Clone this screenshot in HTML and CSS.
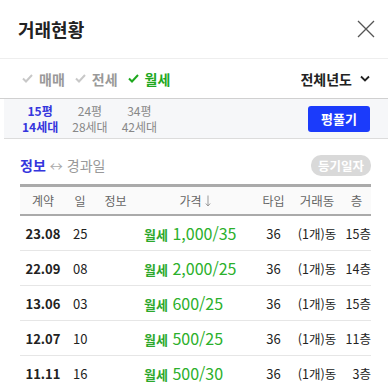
FILE: index.html
```html
<!DOCTYPE html>
<html lang="ko">
  <head>
    <meta charset="UTF-8" />
    <meta name="viewport" content="width=device-width, initial-scale=1.0" />
    <title>거래현황</title>
    <link rel="stylesheet" href="styles.css">
  </head>
  <body>
    <div class="header">
      <h1>거래현황</h1>
      <svg class="close" width="20" height="20" viewBox="0 0 20 20">
        <path d="M2 2L18 18M18 2L2 18" stroke="#555" stroke-width="1.3" fill="none" />
      </svg>
    </div>

    <div class="filters">
      <div class="types">
        <span class="type">
          <svg width="11" height="9" viewBox="0 0 11 9"><path d="M1 4.5L4 7.5L10 1" stroke="currentColor" stroke-width="2" fill="none" /></svg>
          매매
        </span>
        <span class="type">
          <svg width="11" height="9" viewBox="0 0 11 9"><path d="M1 4.5L4 7.5L10 1" stroke="currentColor" stroke-width="2" fill="none" /></svg>
          전세
        </span>
        <span class="type active">
          <svg width="11" height="9" viewBox="0 0 11 9"><path d="M1 4.5L4 7.5L10 1" stroke="currentColor" stroke-width="2" fill="none" /></svg>
          월세
        </span>
      </div>
      <div class="year">
        전체년도
        <svg width="10" height="7" viewBox="0 0 10 7"><path d="M1 1.5L5 5.5L9 1.5" stroke="#222" stroke-width="1.8" fill="none" /></svg>
      </div>
    </div>

    <div class="areas">
      <div class="area-list">
        <div class="area selected"><span>15평</span><span>14세대</span></div>
        <div class="area"><span>24평</span><span>28세대</span></div>
        <div class="area"><span>34평</span><span>42세대</span></div>
      </div>
      <button class="pyeong">평풀기</button>
    </div>

    <div class="info">
      <div class="toggle">
        <span class="on">정보</span>
        <span class="arrow">&harr;</span>
        <span>경과일</span>
      </div>
      <span class="pill">등기일자</span>
    </div>

    <div class="table">
      <div class="row head">
        <span class="c-date">계약</span>
        <span class="c-day">일</span>
        <span class="c-info">정보</span>
        <span class="c-price">가격<svg class="down" width="6" height="12" viewBox="0 0 6 12"><path d="M3 0.5V11M0.8 8.5L3 11L5.2 8.5" stroke="#999" stroke-width="1" fill="none" /></svg></span>
        <span class="c-type">타입</span>
        <span class="c-dong">거래동</span>
        <span class="c-floor">층</span>
      </div>
      <div class="row">
        <span class="c-date">23.08</span>
        <span class="c-day">25</span>
        <span class="c-info"></span>
        <span class="c-price"><small>월세</small> 1,000/35</span>
        <span class="c-type">36</span>
        <span class="c-dong">(1개)동</span>
        <span class="c-floor">15층</span>
      </div>
      <div class="row">
        <span class="c-date">22.09</span>
        <span class="c-day">08</span>
        <span class="c-info"></span>
        <span class="c-price"><small>월세</small> 2,000/25</span>
        <span class="c-type">36</span>
        <span class="c-dong">(1개)동</span>
        <span class="c-floor">14층</span>
      </div>
      <div class="row">
        <span class="c-date">13.06</span>
        <span class="c-day">03</span>
        <span class="c-info"></span>
        <span class="c-price"><small>월세</small> 600/25</span>
        <span class="c-type">36</span>
        <span class="c-dong">(1개)동</span>
        <span class="c-floor">15층</span>
      </div>
      <div class="row">
        <span class="c-date">12.07</span>
        <span class="c-day">10</span>
        <span class="c-info"></span>
        <span class="c-price"><small>월세</small> 500/25</span>
        <span class="c-type">36</span>
        <span class="c-dong">(1개)동</span>
        <span class="c-floor">11층</span>
      </div>
      <div class="row">
        <span class="c-date">11.11</span>
        <span class="c-day">16</span>
        <span class="c-info"></span>
        <span class="c-price"><small>월세</small> 500/30</span>
        <span class="c-type">36</span>
        <span class="c-dong">(1개)동</span>
        <span class="c-floor">3층</span>
      </div>
    </div>
  </body>
</html>
```

FILE: styles.css
```css
body {
  margin: 0;
  font-family: "Noto Sans CJK KR", "Noto Sans", sans-serif;
  color: #222;
  background: #fff;
  overflow: hidden;
}
.header {
  height: 58px;
  display: flex;
  align-items: center;
  justify-content: space-between;
  padding: 0 12px 0 18px;
  border-bottom: 1px solid #eee;
}
h1 {
  margin: 0;
  font-size: 18px;
  font-weight: 700;
  color: #222;
}
.filters {
  height: 39px;
  display: flex;
  align-items: center;
  justify-content: space-between;
  padding: 0 18px 0 22px;
  border-bottom: 1px solid #d0d0d0;
}
.types {
  display: flex;
  gap: 10px;
}
.type {
  display: flex;
  align-items: center;
  gap: 6px;
  font-size: 14px;
  font-weight: 700;
  color: #999;
}
.type svg {
  color: #c8c8c8;
}
.type.active {
  color: #1ea81e;
}
.type.active svg {
  color: #1ea81e;
}
.year {
  display: flex;
  align-items: center;
  gap: 8px;
  font-size: 14px;
  font-weight: 700;
  color: #222;
}
.areas {
  margin-left: 4px;
  height: 39px;
  display: flex;
  align-items: center;
  justify-content: space-between;
  padding: 0 18px;
  background: #f6f7f9;
  border-bottom: 1px solid #dcdcdc;
}
.area-list {
  display: flex;
  gap: 14px;
}
.area {
  display: flex;
  flex-direction: column;
  align-items: center;
  font-size: 12px;
  line-height: 16px;
  color: #888;
}
.area.selected {
  color: #3535dd;
  font-weight: 700;
}
.pyeong {
  width: 62px;
  height: 26px;
  border: none;
  border-radius: 3px;
  background: #1b3bfb;
  color: #fff;
  font-family: inherit;
  font-size: 13px;
  font-weight: 700;
  padding: 0;
}
.info {
  height: 38px;
  display: flex;
  align-items: center;
  justify-content: space-between;
  padding: 7px 17px 0 20px;
}
.toggle {
  display: flex;
  align-items: center;
  gap: 4px;
  font-size: 14px;
  color: #999;
}
.toggle .on {
  color: #3535dd;
  font-weight: 700;
}
.toggle .arrow {
  font-size: 13px;
  color: #aaa;
}
.pill {
  background: #d9d9d9;
  color: #fff;
  font-size: 12.5px;
  font-weight: 700;
  padding: 1px 7px;
  border-radius: 10px;
}
.table {
  margin: 0 17px 0 20px;
  border-top: 3px solid #aaa;
}
.row {
  display: grid;
  grid-template-columns: 44px 32px 39px 120px 37px 50px 29px;
  align-items: center;
  height: 34px;
  border-bottom: 1px solid #e6e6e6;
  font-size: 13px;
  color: #222;
}
.row.head {
  height: 27px;
  background: #fafafa;
  border-bottom: 2px solid #aaa;
  color: #666;
  font-size: 12px;
}
.row.head span {
  text-align: center;
}
.c-date {
  text-align: center;
  font-weight: 700;
  padding-left: 2px;
}
.head .c-date {
  font-weight: 400;
}
.c-day {
  padding-left: 9px;
}
.head .c-day {
  padding-left: 0;
}
.c-price {
  padding-left: 9px;
  font-size: 16px;
  color: #2bb02b;
}
.head .c-price {
  padding-left: 0;
  font-size: 12px;
  color: #666;
}
.c-price small {
  font-size: 13px;
  font-weight: 700;
  color: #2ca82c;
}
.down {
  margin-left: 3px;
  vertical-align: -1px;
}
.c-type {
  text-align: center;
}
.c-dong {
  text-align: center;
  font-size: 12.5px;
}
.c-floor {
  text-align: right;
  font-size: 12.5px;
}
```
